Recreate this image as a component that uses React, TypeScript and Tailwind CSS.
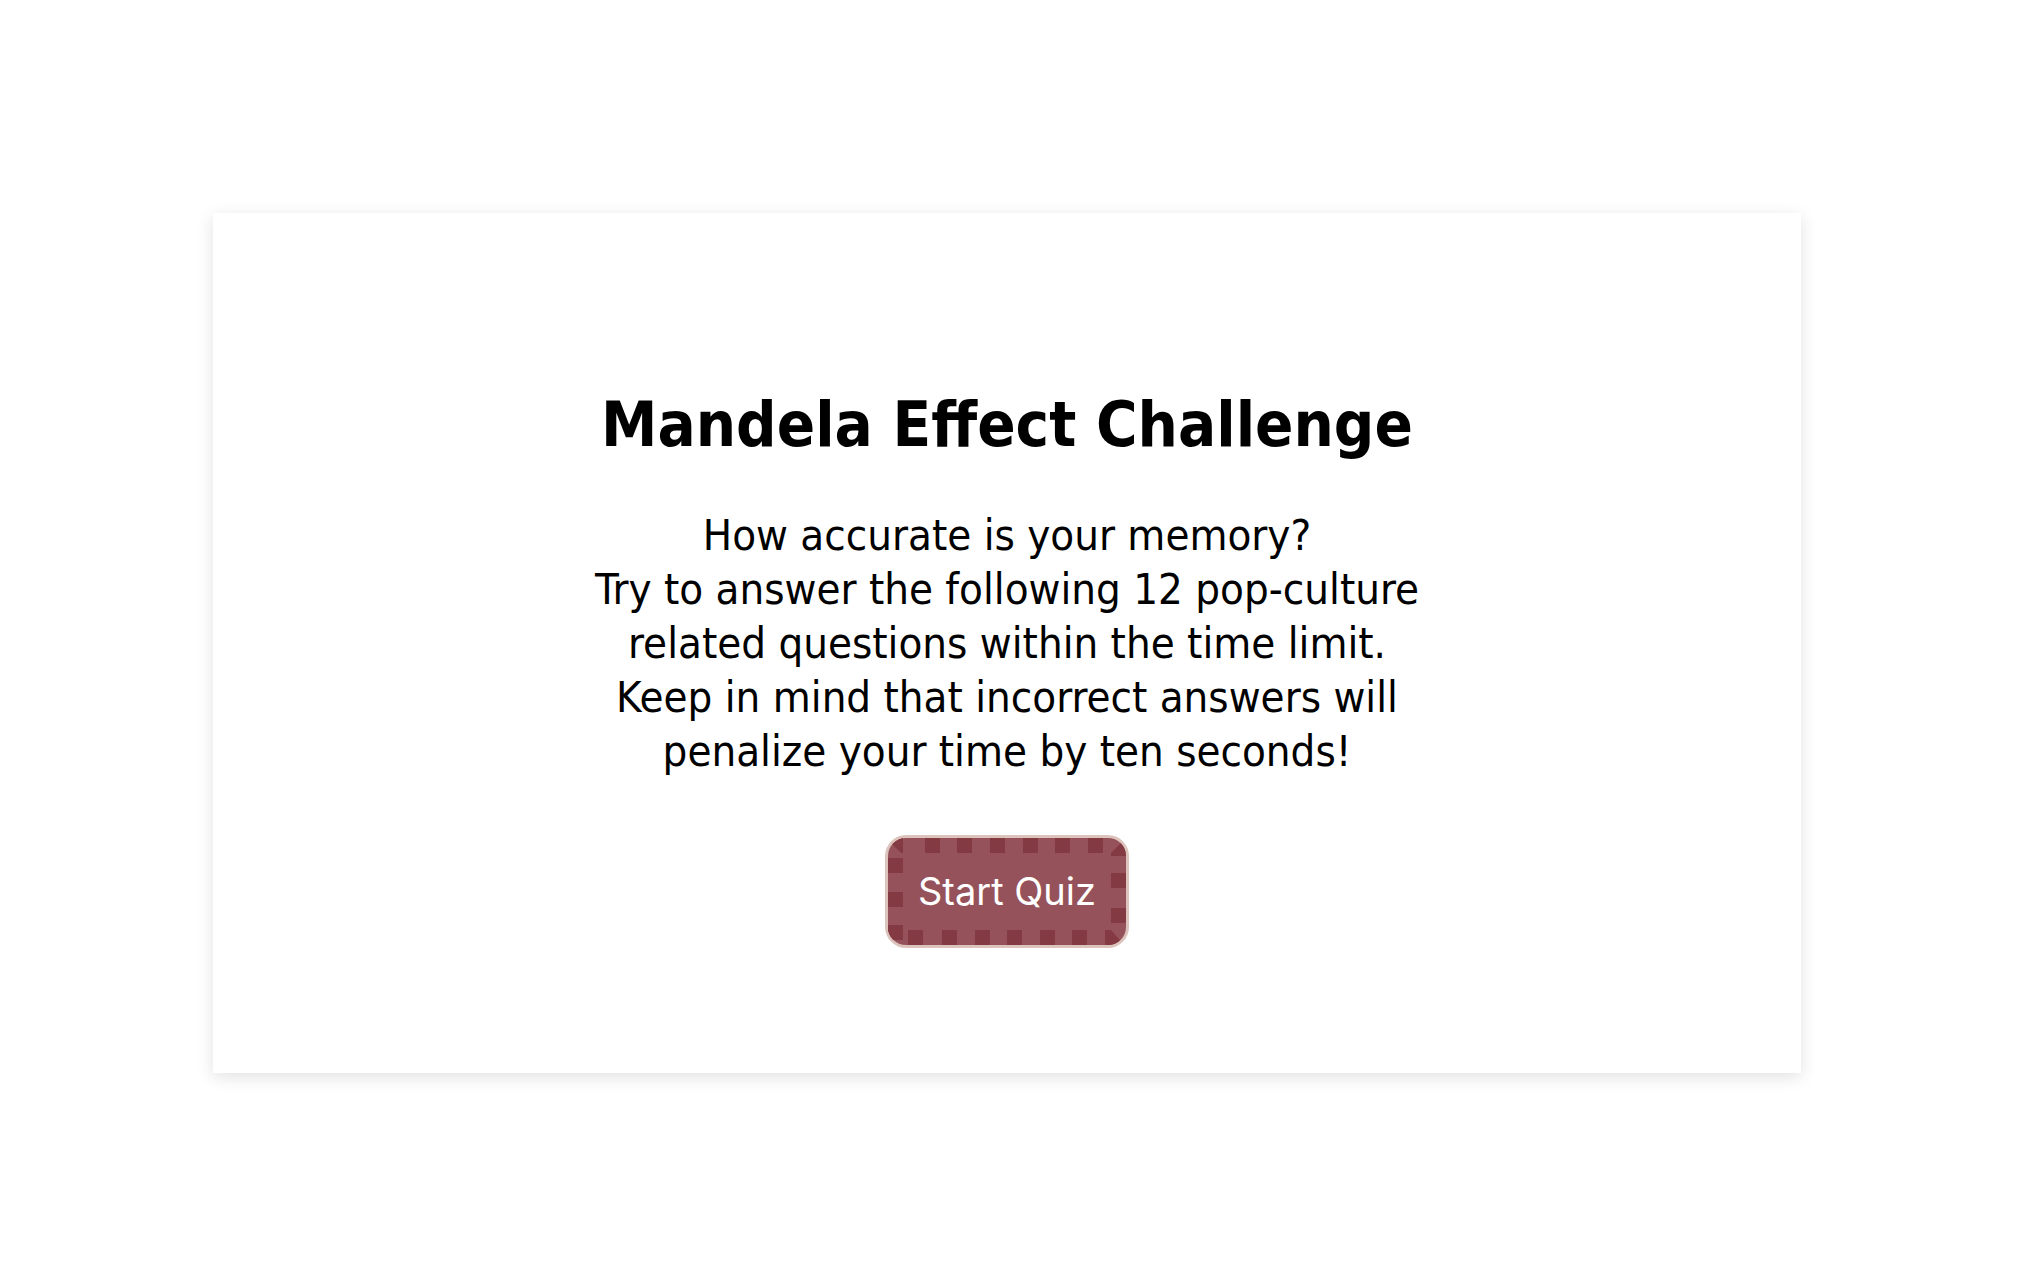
import React from 'react';

// square "dots" of the button border, in coords of the 238x107 box inside the ring
const topDots = [37, 69, 102, 135, 167, 200];
const bottomDots = [20, 54, 87, 119, 152, 184];
const leftDots = [20, 54, 87];
const rightDots = [35, 70];

function DottedBorder() {
  return (
    <svg className="pointer-events-none absolute inset-0" width="238" height="107" viewBox="0 0 238 107">
      <g fill="#843a43">
        {topDots.map(x => (
          <rect key={`t${x}`} x={x} y={0} width={15} height={15} />
        ))}
        {bottomDots.map(x => (
          <rect key={`b${x}`} x={x} y={92} width={15} height={15} />
        ))}
        {leftDots.map(y => (
          <rect key={`l${y}`} x={0} y={y} width={15} height={15} />
        ))}
        {rightDots.map(y => (
          <rect key={`r${y}`} x={223} y={y} width={15} height={15} />
        ))}
        <polygon points="3,0 15,0 15,15 13,15 3,5" />
        <polygon points="238,3 238,18 223,18 223,15 233,5" />
        <polygon points="217,92 223,92 236,107 217,107" />
        <polygon points="0,88 15,88 15,92 4,103 0,103" />
      </g>
    </svg>
  );
}

export default function App() {
  return (
    <div className="min-h-[1270px] bg-white pt-[213px] pl-[213px]">
      <div className="flex h-[860px] w-[1588px] flex-col items-center bg-white pt-[175px] shadow-[0_4px_16px_rgba(0,0,0,0.12)]">
        <h1 className="font-['DejaVu_Sans_Condensed','DejaVu_Sans',sans-serif] text-[63px] font-bold leading-[74px] text-black">
          Mandela Effect Challenge
        </h1>
        <p className="mt-[46px] text-center font-['DejaVu_Sans_Condensed','DejaVu_Sans',sans-serif] text-[43.4px] leading-[54px] text-black">
          How accurate is your memory?
          <br />
          Try to answer the following 12 pop-culture
          <br />
          related questions within the time limit.
          <br />
          Keep in mind that incorrect answers will
          <br />
          penalize your time by ten seconds!
        </p>
        <button
          type="button"
          className="relative mt-[60px] flex h-[107px] w-[238px] items-center justify-center overflow-hidden rounded-[18px] bg-[#96525a] font-['Inter',sans-serif] text-[38px] text-white shadow-[0_0_0_3px_#dcc4bc]"
        >
          <DottedBorder />
          <span className="relative">Start Quiz</span>
        </button>
      </div>
    </div>
  );
}
